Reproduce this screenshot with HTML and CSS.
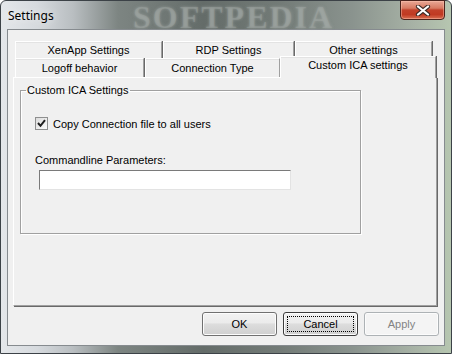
FILE: index.html
```html
<!DOCTYPE html>
<html lang="en">
<head>
    <meta charset="UTF-8">
    <title>Settings</title>
    <link rel="stylesheet" href="styles.css">
</head>
<body>
    <div class="window">
        <div class="titlebar">
            <span class="title">Settings</span>
            <span class="watermark">SOFTPEDIA</span>
            <button class="close" type="button">
                <svg width="16" height="11" viewBox="0 0 16 11">
                    <path d="M3 1.5 L13 9.5 M13 1.5 L3 9.5" stroke="#3b2a26" stroke-width="4.2" stroke-linecap="round"/>
                    <path d="M3 1.5 L13 9.5 M13 1.5 L3 9.5" stroke="#ffffff" stroke-width="2.2" stroke-linecap="round"/>
                </svg>
            </button>
        </div>

        <div class="client">
            <div class="tabs">
                <div class="tab-row back">
                    <div class="tab w-xenapp">XenApp Settings</div>
                    <div class="tab w-rdp">RDP Settings</div>
                    <div class="tab w-other">Other settings</div>
                </div>
                <div class="tab-row front">
                    <div class="tab w-logoff">Logoff behavior</div>
                    <div class="tab w-conn">Connection Type</div>
                    <div class="tab selected w-custom">Custom ICA settings</div>
                </div>
            </div>

            <div class="panel">
                <fieldset class="group">
                    <legend>Custom ICA Settings</legend>
                    <label class="check">
                        <span class="box">
                            <svg width="9" height="9" viewBox="0 0 9 9">
                                <path d="M1 4 L3.5 6.8 L8 1.2" fill="none" stroke="#1e1e1e" stroke-width="2"/>
                            </svg>
                        </span>
                        Copy Connection file to all users
                    </label>
                    <label class="field-label" for="params">Commandline Parameters:</label>
                    <input type="text" id="params" class="field">
                </fieldset>
            </div>

            <div class="buttons">
                <button type="button" class="btn">OK</button>
                <button type="button" class="btn focused"><span>Cancel</span></button>
                <button type="button" class="btn disabled">Apply</button>
            </div>
        </div>
    </div>
</body>
</html>
```

FILE: styles.css
```css
html, body {
    margin: 0;
    padding: 0;
}
body {
    width: 452px;
    height: 354px;
    overflow: hidden;
    font-family: "Liberation Sans", Arial, sans-serif;
    font-size: 11px;
}
.window {
    width: 452px;
    height: 354px;
    box-sizing: border-box;
    display: flex;
    flex-direction: column;
    border: 1px solid #3c4247;
    border-radius: 6px 6px 0 0;
    background: linear-gradient(to right, #e4e7ea 0%, #d6dade 8%, #b9bec1 16%, #7d8582 26%, #646c69 45%, #737b77 62%, #8a938e 78%, #a8b3a6 92%, #b6c6b0 100%);
}
.titlebar {
    height: 28px;
    display: flex;
    align-items: flex-start;
    position: relative;
}
.title {
    font-family: "Noto Sans", "Open Sans", sans-serif;
    font-size: 12px;
    color: #000;
    margin: 6px 0 0 7px;
    text-shadow: 0 0 8px rgba(255, 255, 255, 0.9);
}
.watermark {
    position: absolute;
    left: 132px;
    top: -2px;
    font-family: "Liberation Serif", serif;
    font-weight: bold;
    font-size: 32px;
    letter-spacing: 2px;
    color: rgba(170, 176, 173, 0.35);
    text-shadow: 0 0 3px rgba(170, 176, 173, 0.6);
}
.close {
    margin-left: auto;
    margin-right: 6px;
    margin-top: -1px;
    width: 45px;
    height: 20px;
    padding: 0;
    border: 1px solid #4b231c;
    border-radius: 0 0 4px 4px;
    background: linear-gradient(to bottom, #e9a896 0%, #d77a62 40%, #c2412a 50%, #c03a22 75%, #d86f52 100%);
    box-shadow: inset 0 0 0 1px rgba(255, 200, 180, 0.45);
    display: flex;
    align-items: center;
    justify-content: center;
}
.client {
    flex: 1;
    margin: 0 6px 7px 6px;
    background: #f0f0f0;
    border: 1px solid #868b8f;
    display: flex;
    flex-direction: column;
    padding: 11px 4px 0 5px;
}
.tabs {
    display: flex;
    flex-direction: column;
    margin-left: 2px;
}
.tab-row {
    display: flex;
}
.tab {
    box-sizing: border-box;
    border-top: 1px solid #ffffff;
    border-left: 1px solid #ffffff;
    border-right: 1px solid #a0a0a0;
    box-shadow: 1px 0 0 #696969, inset 0 1px 0 #e3e3e3;
    background: #f0f0f0;
    text-align: center;
    color: #000;
}
.back .tab {
    height: 17px;
    line-height: 16px;
    margin-right: 1px;
}
.front .tab {
    height: 19px;
    line-height: 18px;
}
.front .tab.selected {
    height: 22px;
    margin-top: -2px;
    margin-bottom: -1px;
    line-height: 17px;
    position: relative;
    z-index: 1;
}
.w-xenapp { width: 147px; }
.w-rdp { width: 131px; }
.w-other { width: 137px; }
.w-logoff { width: 129px; margin-right: 1px; }
.w-conn { width: 135px; }
.w-custom { width: 156px; }
.panel {
    width: 424px;
    height: 229px;
    box-sizing: border-box;
    border-top: 1px solid #ffffff;
    border-left: 1px solid #ffffff;
    border-right: 1px solid #a0a0a0;
    border-bottom: 1px solid #a0a0a0;
    box-shadow: 1px 1px 0 #696969;
    padding: 6px 0 0 6px;
}
.group {
    box-sizing: border-box;
    width: 341px;
    height: 150px;
    margin: 0;
    padding: 0 0 0 14px;
    border: 1px solid #a0a0a0;
    box-shadow: 1px 1px 0 #ffffff, inset 1px 1px 0 #ffffff;
    display: flex;
    flex-direction: column;
    align-items: flex-start;
}
.group legend {
    padding: 0 1px;
    margin-left: -9px;
    line-height: 13px;
}
.check {
    display: flex;
    align-items: center;
    gap: 5px;
    margin-top: 20px;
}
.box {
    width: 13px;
    height: 13px;
    box-sizing: border-box;
    border: 1px solid #8e8f8f;
    background: linear-gradient(135deg, #dcdcdc, #fbfbfb);
    display: flex;
    align-items: center;
    justify-content: center;
}
.field-label {
    margin-top: 24px;
}
.field {
    width: 252px;
    height: 20px;
    box-sizing: border-box;
    margin: 4px 0 0 4px;
    border: 1px solid;
    border-color: #7a7a7a #e3e3e3 #e3e3e3 #7a7a7a;
    background: #fff;
    padding: 2px;
    font-family: inherit;
    font-size: 11px;
}
.buttons {
    display: flex;
    justify-content: flex-end;
    gap: 6px;
    margin-top: 6px;
    padding-right: 1px;
}
.btn {
    width: 75px;
    height: 24px;
    box-sizing: border-box;
    border: 1px solid #707070;
    border-radius: 3px;
    background: linear-gradient(to bottom, #f2f2f2 0%, #ebebeb 45%, #dddddd 50%, #cfcfcf 100%);
    box-shadow: inset 0 0 0 1px #fcfcfc;
    font-family: "Liberation Sans", Arial, sans-serif;
    font-size: 11px;
    color: #000;
    padding: 0;
}
.btn.focused {
    border-color: #3c3c3c;
    padding: 3px;
}
.btn.focused span {
    display: block;
    height: 100%;
    box-sizing: border-box;
    border: 1px dotted #000;
    line-height: 14px;
}
.btn.disabled {
    border-color: #adb2b5;
    background: #f4f4f4;
    color: #838383;
}
```
